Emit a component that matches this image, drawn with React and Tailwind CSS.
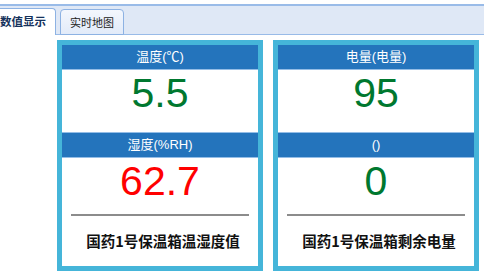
const panels = [
    {
        top: "温度(℃)",
        topValue: "5.5",
        topColor: "text-[#00782f]",
        bottom: "湿度(%RH)",
        bottomValue: "62.7",
        bottomColor: "text-[#ff0000]",
        title: "国药1号保温箱温湿度值",
    },
    {
        top: "电量(电量)",
        topValue: "95",
        topColor: "text-[#00782f]",
        bottom: "()",
        bottomValue: "0",
        bottomColor: "text-[#00782f]",
        title: "国药1号保温箱剩余电量",
    },
];

const Panel = ({ p }) => (
    <div className="w-[206px] h-[231px] border-[5px] border-[#45b5d9] bg-white flex flex-col">
        <div className="h-[25px] bg-[#2474bc] border-b border-[#94bde6] text-white text-[13px] flex items-center justify-center">
            {p.top}
        </div>
        <div className={`h-[62px] pt-[3px] text-center text-[41px] leading-[40px] font-['Liberation_Sans',sans-serif] ${p.topColor}`}>
            {p.topValue}
        </div>
        <div className="h-[26px] bg-[#2474bc] border-y border-[#94bde6] text-white text-[13px] flex items-center justify-center">
            {p.bottom}
        </div>
        <div className={`h-[56px] pt-[3px] text-center text-[41px] leading-[40px] font-['Liberation_Sans',sans-serif] ${p.bottomColor}`}>
            {p.bottomValue}
        </div>
        <div className="mx-[9px] h-[2px] bg-[#8c8c8c]" />
        <div className="flex-1 flex items-center justify-center pl-[6px] text-[14.5px] font-bold text-[#111] font-['Noto_Sans_CJK_SC',sans-serif]">
            {p.title}
        </div>
    </div>
);

const App = () => {
    return (
        <div className="w-[484px] h-[280px] bg-white overflow-hidden font-['Liberation_Sans','Noto_Sans_CJK_SC',sans-serif]">
            <div className="mt-[4px] h-[31px] bg-[#dfe8f6] border-t-2 border-b border-[#99bbe8] flex items-end">
                <div className="flex items-end gap-[4px] ml-[-10px] mb-[-1px]">
                    <div className="h-[27px] px-[9px] bg-white border border-b-0 border-[#8db2e3] rounded-t-[4px] flex items-center text-[11.5px] font-bold text-[#15325b] font-['Noto_Sans_CJK_SC',sans-serif]">
                        数值显示
                    </div>
                    <div className="h-[26px] px-[9px] bg-gradient-to-b from-[#f3f7fd] to-[#e2ebf9] border border-[#8db2e3] rounded-t-[4px] flex items-center text-[11px] text-[#222] font-['Noto_Sans_CJK_SC',sans-serif]">
                        实时地图
                    </div>
                </div>
            </div>
            <div className="flex gap-[10px] pl-[57px] pt-[5px]">
                {panels.map((p, i) => (
                    <Panel key={i} p={p} />
                ))}
            </div>
        </div>
    );
};

export default App;
